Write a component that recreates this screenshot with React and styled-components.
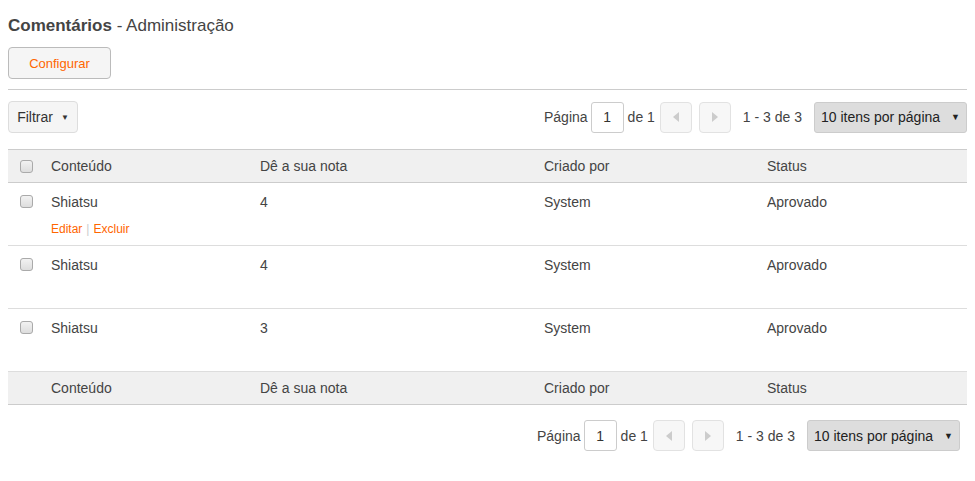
import styled, { createGlobalStyle } from "styled-components";

const Global = createGlobalStyle`
	body {
		margin: 0;
		font-family: "Liberation Sans", Arial, sans-serif;
		color: #444;
		background: #fff;
	}
`;

const Page = styled.div`
	padding: 0 8px;
`;

const Title = styled.h1`
	margin: 0;
	padding-top: 16px;
	height: 47px;
	box-sizing: border-box;
	font-size: 17px;
	line-height: 20px;
	font-weight: normal;
	color: #444;
	b {
		font-weight: bold;
	}
`;

const ConfigButton = styled.button`
	display: block;
	width: 103px;
	height: 32px;
	background: #f5f5f5;
	border: 1px solid #bbb;
	border-radius: 4px;
	color: #f60;
	font-family: inherit;
	font-size: 13px;
`;

const Rule = styled.hr`
	border: 0;
	border-top: 1px solid #ccc;
	margin: 10px 0 11px;
`;

const Toolbar = styled.div`
	display: flex;
	justify-content: space-between;
	align-items: center;
	padding-right: ${(p) => p.$right || 0}px;
	margin: ${(p) => p.$margin || 0};
`;

const FilterButton = styled.button`
	width: 70px;
	height: 32px;
	background: #f5f5f5;
	border: 1px solid #ddd;
	border-radius: 4px;
	color: #333;
	font-family: inherit;
	font-size: 14px;
	display: flex;
	align-items: center;
	justify-content: center;
	gap: 8px;
	padding: 0;
	span {
		font-size: 8px;
	}
`;

const Pager = styled.div`
	display: flex;
	align-items: center;
	font-size: 14px;
	color: #444;
	margin-left: auto;
`;

const PageInput = styled.div`
	width: 33px;
	height: 31px;
	box-sizing: border-box;
	border: 1px solid #ccc;
	border-radius: 3px;
	display: flex;
	align-items: center;
	justify-content: center;
	margin: 0 4px 0 3px;
	color: #333;
`;

const Arrow = styled.div`
	width: 32px;
	height: 31px;
	box-sizing: border-box;
	border: 1px solid #e2e2e2;
	border-radius: 4px;
	background: #f7f7f7;
	display: flex;
	align-items: center;
	justify-content: center;
	margin-left: ${(p) => p.$gap}px;
`;

const Range = styled.span`
	margin: 0 12px 0 12px;
`;

const PerPage = styled.div`
	width: 153px;
	height: 31px;
	box-sizing: border-box;
	background: #ddd;
	border: 1px solid #ccc;
	border-radius: 3px;
	display: flex;
	align-items: center;
	justify-content: space-between;
	padding: 0 6px 0 6px;
	color: #222;
	span {
		font-size: 9px;
	}
`;

const Table = styled.table`
	width: 100%;
	border-collapse: collapse;
	font-size: 14px;
	margin-top: 16px;
`;

const HeadRow = styled.tr`
	background: #f0f0f0;
	border-top: 1px solid #ccc;
	border-bottom: 1px solid #ccc;
	th {
		height: 32px;
		text-align: left;
		font-weight: normal;
		padding: 0 8px;
		color: #444;
	}
`;

const Row = styled.tr`
	border-bottom: 1px solid #ddd;
	td {
		height: 63px;
		vertical-align: top;
		padding: 11px 8px 0;
		box-sizing: border-box;
		color: #444;
	}
`;

const CheckCell = styled.td`
	width: 15px;
	&& {
		padding: ${(p) => (p.$head ? "0 8px 0 12px" : "12px 8px 0 12px")};
	}
`;

const Check = styled.div`
	width: 11px;
	height: 11px;
	border: 1px solid #aaa;
	border-radius: 3px;
	background: linear-gradient(#f2f2f2, #ddd);
`;

const Actions = styled.div`
	margin-top: 12px;
	font-size: 12px;
	color: #f60;
	i {
		font-style: normal;
		color: #ccc;
		margin: 0 4px;
	}
`;

const Caret = ({ dir }) => (
	<svg width="6" height="10" viewBox="0 0 6 10">
		<path d={dir === "l" ? "M6 0 L0 5 L6 10 Z" : "M0 0 L6 5 L0 10 Z"} fill="#ccc" />
	</svg>
);

const Pagination = () => (
	<Pager>
		Página
		<PageInput>1</PageInput>
		de 1
		<Arrow $gap={5}>
			<Caret dir="l" />
		</Arrow>
		<Arrow $gap={7}>
			<Caret dir="r" />
		</Arrow>
		<Range>1 - 3 de 3</Range>
		<PerPage>
			10 itens por página <span>▼</span>
		</PerPage>
	</Pager>
);

const rows = [
	{ name: "Shiatsu", nota: "4", actions: true },
	{ name: "Shiatsu", nota: "4" },
	{ name: "Shiatsu", nota: "3" },
];

const Header = ({ foot }) => (
	<HeadRow>
		<CheckCell as="th" $head>{!foot && <Check />}</CheckCell>
		<th style={{ width: 193 }}>Conteúdo</th>
		<th style={{ width: 268 }}>Dê a sua nota</th>
		<th style={{ width: 207 }}>Criado por</th>
		<th>Status</th>
	</HeadRow>
);

export default function App() {
	return (
		<Page>
			<Global />
			<Title>
				<b>Comentários</b> - Administração
			</Title>
			<ConfigButton>Configurar</ConfigButton>
			<Rule />
			<Toolbar>
				<FilterButton>
					Filtrar <span>▼</span>
				</FilterButton>
				<Pagination />
			</Toolbar>
			<Table>
				<thead>
					<Header />
				</thead>
				<tbody>
					{rows.map((r, i) => (
						<Row key={i}>
							<CheckCell>
								<Check />
							</CheckCell>
							<td>
								{r.name}
								{r.actions && (
									<Actions>
										Editar<i>|</i>Excluir
									</Actions>
								)}
							</td>
							<td>{r.nota}</td>
							<td>System</td>
							<td>Aprovado</td>
						</Row>
					))}
				</tbody>
				<tfoot>
					<Header foot />
				</tfoot>
			</Table>
			<Toolbar $right={7} $margin="15px 0 0">
				<Pagination />
			</Toolbar>
		</Page>
	);
}
